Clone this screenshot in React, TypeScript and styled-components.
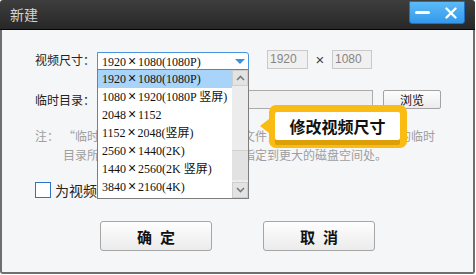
import styled, { createGlobalStyle } from "styled-components";

const GlobalStyle = createGlobalStyle`
  html, body { margin: 0; padding: 0; background: #fff; }
  body {
    font-family: "Noto Sans CJK SC", "Noto Sans", sans-serif;
    font-size: 12px;
    color: #333;
  }
  * { box-sizing: border-box; }
`;

type Size = { w: string; h: string; tag: string };

const sizes: Size[] = [
  { w: "1920", h: "1080", tag: "(1080P)" },
  { w: "1080", h: "1920", tag: "(1080P 竖屏)" },
  { w: "2048", h: "1152", tag: "" },
  { w: "1152", h: "2048", tag: "(竖屏)" },
  { w: "2560", h: "1440", tag: "(2K)" },
  { w: "1440", h: "2560", tag: "(2K 竖屏)" },
  { w: "3840", h: "2160", tag: "(4K)" },
];

const App = () => {
  return (
    <>
      <GlobalStyle />
      <Window>
        <TitleBar>
          <Title>新建</Title>
          <WinButtons>
            <WinButton>
              <MinBar />
            </WinButton>
            <WinButton>
              <svg width="12" height="12" viewBox="0 0 12 12">
                <path d="M1.5 1.5 L10.5 10.5 M10.5 1.5 L1.5 10.5" stroke="#fff" strokeWidth="2.4" strokeLinecap="round" />
              </svg>
            </WinButton>
          </WinButtons>
        </TitleBar>

        <Body>
          <Row>
            <Label>视频尺寸：</Label>
            <Select>
              <span>
                1920<Mul>×</Mul>1080(1080P)
              </span>
              <Arrow />
              <DropList>
                <Items>
                  {sizes.map((s, i) => (
                    <Item key={i} selected={i === 0}>
                      {s.w}
                      <Mul>×</Mul>
                      {s.h}
                      {s.tag}
                    </Item>
                  ))}
                </Items>
                <ScrollBar>
                  <ScrollButton>
                    <svg width="9" height="6" viewBox="0 0 9 6">
                      <path d="M1 5 L4.5 1.5 L8 5" stroke="#7b7b7b" strokeWidth="1.6" fill="none" />
                    </svg>
                  </ScrollButton>
                  <Track>
                    <Thumb />
                  </Track>
                  <ScrollButton>
                    <svg width="9" height="6" viewBox="0 0 9 6">
                      <path d="M1 1 L4.5 4.5 L8 1" stroke="#7b7b7b" strokeWidth="1.6" fill="none" />
                    </svg>
                  </ScrollButton>
                </ScrollBar>
              </DropList>
            </Select>
            <SizeInput width={41}>1920</SizeInput>
            <Times>×</Times>
            <SizeInput width={40} tight>
              1080
            </SizeInput>
          </Row>

          <Row2>
            <Label>临时目录：</Label>
            <PathInput />
            <SmallButton>浏览</SmallButton>
          </Row2>

          <Note>
            <NoteHead>注：</NoteHead>
            <NoteBody>
              <div>“临时目录”用于存放运行时临时文件，若空间不足，可将默认的临时</div>
              <div>目录所在位置，通过右侧浏览按钮指定到更大的磁盘空间处。</div>
            </NoteBody>
          </Note>

          <CheckRow>
            <CheckBox />
            <CheckLabel>为视频自动命名</CheckLabel>
          </CheckRow>

          <ButtonRow>
            <DialogButton>确定</DialogButton>
            <DialogButton>取消</DialogButton>
          </ButtonRow>
        </Body>

        <Callout>
          <CalloutInner>修改视频尺寸</CalloutInner>
        </Callout>
      </Window>
    </>
  );
};

export default App;

const Window = styled.div`
  position: relative;
  width: 475px;
  height: 274px;
  display: flex;
  flex-direction: column;
`;

const TitleBar = styled.div`
  flex: none;
  height: 30px;
  display: flex;
  justify-content: space-between;
  align-items: flex-start;
  padding: 0 10px;
  background: linear-gradient(#3e3e3e, #272727);
  border-bottom: 1px solid #050505;
  border-radius: 3px 3px 0 0;
`;

const Title = styled.div`
  font-size: 14px;
  line-height: 29px;
  color: #d4d4d4;
`;

const WinButtons = styled.div`
  display: flex;
  margin-top: 1px;
  height: 23px;
  border: 1px solid #2070c0;
  border-radius: 0 0 3px 3px;
  background: linear-gradient(#5cbaf8, #3399ec);
  overflow: hidden;
`;

const WinButton = styled.div`
  width: 27px;
  height: 100%;
  display: flex;
  align-items: center;
  justify-content: center;
`;

const MinBar = styled.div`
  width: 15px;
  height: 3px;
  border-radius: 2px;
  background: #fff;
  margin-right: 2px;
`;

const Body = styled.div`
  position: relative;
  flex: 1;
  background: #f5f6f8;
  border: 2px solid #6f6f6f;
  border-top: none;
  border-radius: 0 0 3px 3px;
  padding: 20px 33px 0 33px;
`;

const Row = styled.div`
  display: flex;
  align-items: flex-start;
  height: 20px;
`;

const Row2 = styled(Row)`
  margin-top: 20px;
  height: 19px;
`;

const Label = styled.div`
  width: 62px;
  flex: none;
  margin-top: 1px;
  line-height: 18px;
  color: #222;
`;

const Select = styled.div`
  position: relative;
  z-index: 2;
  margin-top: 2px;
  width: 152px;
  height: 18px;
  flex: none;
  border: 1px solid #4a93de;
  border-radius: 0 3px 0 0;
  background: #fff;
  padding-left: 4px;
  line-height: 16px;
  font-family: "Liberation Serif", "Noto Sans CJK SC", serif;
  font-size: 12px;
  color: #111;
`;

const Mul = styled.span`
  display: inline-block;
  width: 12px;
  text-align: center;
  font-size: 14px;
  font-family: "Liberation Sans", sans-serif;
  font-weight: 300;
`;

const Arrow = styled.div`
  position: absolute;
  right: 3px;
  top: 6px;
  width: 0;
  height: 0;
  border-left: 5px solid transparent;
  border-right: 5px solid transparent;
  border-top: 5px solid #3b8ee0;
`;

const DropList = styled.div`
  position: absolute;
  top: 16px;
  left: -1px;
  width: 152px;
  height: 130px;
  display: flex;
  border: 1px solid #7d7d7d;
  background: #fff;
`;

const Items = styled.div`
  flex: 1;
  display: flex;
  flex-direction: column;
`;

const Item = styled.div<{ selected?: boolean }>`
  height: 18px;
  line-height: 17px;
  padding-left: 4px;
  white-space: nowrap;
  overflow: hidden;
  background: ${(p) => (p.selected ? "#a9d4f9" : "transparent")};
`;

const ScrollBar = styled.div`
  width: 16px;
  flex: none;
  display: flex;
  flex-direction: column;
  background: #ececec;
`;

const ScrollButton = styled.div`
  height: 16px;
  display: flex;
  align-items: center;
  justify-content: center;
  background: #e3e3e3;
  border: 1px solid #cfcfcf;
`;

const Track = styled.div`
  flex: 1;
  display: flex;
  flex-direction: column;
  justify-content: flex-end;
  padding: 0 0 2px;
`;

const Thumb = styled.div`
  height: 30px;
  background: #e2e2e2;
  border-top: 1px solid #d2d2d2;
`;

const SizeInput = styled.div<{ width: number; tight?: boolean }>`
  width: ${(p) => p.width}px;
  height: 19px;
  flex: none;
  margin-left: ${(p) => (p.tight ? 0 : 18)}px;
  border: 1px solid #c9c9c9;
  background: #f0f0f0;
  color: #858585;
  line-height: 17px;
  padding-left: 2px;
  font-family: "Liberation Sans", sans-serif;
  font-size: 12px;
`;

const Times = styled.span`
  width: 24px;
  text-align: center;
  line-height: 19px;
  font-family: "Liberation Sans", sans-serif;
  font-size: 15px;
  font-weight: 300;
  color: #444;
`;

const PathInput = styled.div`
  width: 276px;
  height: 19px;
  flex: none;
  border: 1px solid #ababab;
  background: #f0f0f0;
`;

const SmallButton = styled.div`
  width: 58px;
  height: 19px;
  margin-left: 10px;
  flex: none;
  border: 1px solid #a3a3a3;
  border-radius: 2px;
  background: linear-gradient(#fdfdfd, #ebebeb);
  text-align: center;
  line-height: 17px;
  color: #111;
`;

const Note = styled.div`
  margin-top: 17px;
  display: flex;
  color: #9e9e9e;
  line-height: 19px;
  white-space: nowrap;
`;

const NoteHead = styled.div`
  width: 28px;
  flex: none;
`;

const NoteBody = styled.div``;

const CheckRow = styled.div`
  margin-top: 18px;
  display: flex;
  align-items: center;
  gap: 4px;
  height: 16px;
`;

const CheckBox = styled.div`
  width: 16px;
  height: 16px;
  border: 1px solid #2f74c4;
  background: #fff;
`;

const CheckLabel = styled.div`
  font-size: 14px;
  line-height: 16px;
  color: #222;
  white-space: nowrap;
`;

const ButtonRow = styled.div`
  margin-top: 23px;
  display: flex;
  justify-content: center;
  gap: 51px;
`;

const DialogButton = styled.div`
  width: 112px;
  height: 30px;
  border: 1px solid #a6a6a6;
  border-radius: 3px;
  background: linear-gradient(#fefefe, #ebebeb);
  display: flex;
  align-items: center;
  justify-content: center;
  font-size: 15px;
  font-weight: bold;
  letter-spacing: 8px;
  padding-left: 8px;
  color: #111;
`;

const Callout = styled.div`
  position: absolute;
  z-index: 3;
  left: 269px;
  top: 105px;
  width: 138px;
  height: 43px;
  padding: 7px 7px 8px 6px;
  border-radius: 7px;
  background: #fabc12;

  &::before {
    content: "";
    position: absolute;
    left: -9px;
    top: 14px;
    border-right: 9px solid #fabc12;
    border-top: 7px solid transparent;
    border-bottom: 7px solid transparent;
  }
`;

const CalloutInner = styled.div`
  height: 28px;
  background: #fff;
  border-radius: 2px;
  box-shadow: 0 5px 0 #dca006;
  display: flex;
  align-items: center;
  justify-content: center;
  font-size: 16px;
  font-weight: bold;
  color: #111;
`;
